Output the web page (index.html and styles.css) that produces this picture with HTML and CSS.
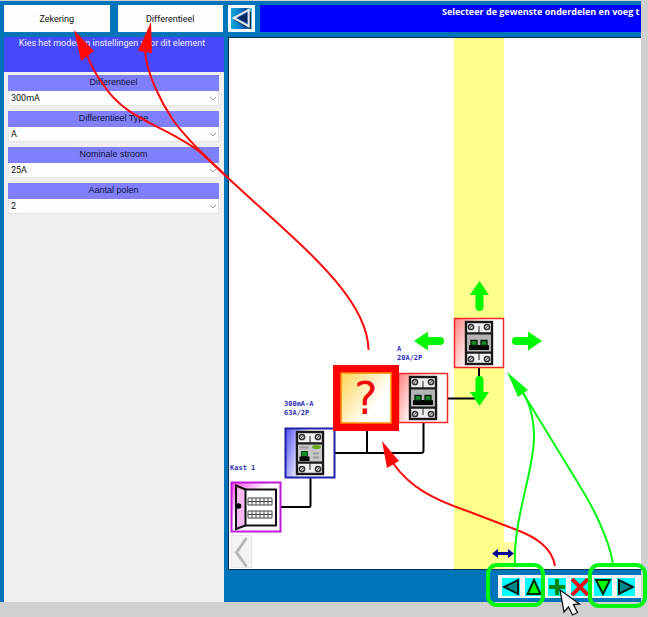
FILE: index.html
```html
<!DOCTYPE html>
<html lang="nl">
<head>
<meta charset="utf-8">
<title>Differentieel</title>
<link rel="stylesheet" href="styles.css">
</head>
<body>
<div class="app">
  <aside class="side">
    <div class="tabs">
      <button class="tab" type="button">Zekering</button>
      <button class="tab" type="button">Differentieel</button>
    </div>
    <p class="hint">Kies het model en instellingen voor dit element</p>
    <form class="settings">
      <div class="field">
        <label for="sens">Differentieel</label>
        <div class="pick"><select id="sens"><option>300mA</option></select><svg class="chev" viewBox="0 0 8 5"><path d="M1 1l3 3 3-3"/></svg></div>
      </div>
      <div class="field">
        <label for="type">Differentieel Type</label>
        <div class="pick"><select id="type"><option>A</option></select><svg class="chev" viewBox="0 0 8 5"><path d="M1 1l3 3 3-3"/></svg></div>
      </div>
      <div class="field">
        <label for="amp">Nominale stroom</label>
        <div class="pick"><select id="amp"><option>25A</option></select><svg class="chev" viewBox="0 0 8 5"><path d="M1 1l3 3 3-3"/></svg></div>
      </div>
      <div class="field">
        <label for="poles">Aantal polen</label>
        <div class="pick"><select id="poles"><option>2</option></select><svg class="chev" viewBox="0 0 8 5"><path d="M1 1l3 3 3-3"/></svg></div>
      </div>
    </form>
  </aside>
  <main class="work">
    <header class="top">
      <button class="back" type="button" aria-label="Terug">
        <svg viewBox="0 0 22 22"><defs><linearGradient id="bk"><stop offset="0" stop-color="#18a8d8"/><stop offset=".45" stop-color="#0878c8"/><stop offset=".7" stop-color="#084ca0"/><stop offset="1" stop-color="#58c8e8"/></linearGradient></defs><path fill="url(#bk)" d="M0 0h22v22H0z"/><path d="M4 12L20 21V4" fill="none" stroke="#102848" stroke-width="2"/><path d="M3 10.500L18.500 2v17z" fill="#0a58b0" stroke="#e4e4e4" stroke-width="2.200"/><path d="M7 10.500L17 5v11z" fill="#082860"/></svg>
      </button>
      <h1 class="title">Selecteer de gewenste onderdelen en voeg t</h1>
    </header>
    <div class="canvas">
      <svg class="scheme" width="413" height="531" viewBox="229 38 413 531">
        <defs>
          <linearGradient id="gr" x2="1" y2=".4"><stop offset="0" stop-color="#ff8080"/><stop offset=".55" stop-color="#fff"/></linearGradient>
          <linearGradient id="gb" x2="1" y2=".25"><stop offset="0" stop-color="#5050f0"/><stop offset=".5" stop-color="#fff"/></linearGradient>
          <linearGradient id="gm" x2=".8" y2=".8"><stop offset="0" stop-color="#ff40e8"/><stop offset=".5" stop-color="#fff"/></linearGradient>
          <linearGradient id="gy" x2="1" y2=".7"><stop offset="0" stop-color="#ffd040"/><stop offset=".75" stop-color="#fff"/></linearGradient>
          <g id="shell">
            <rect x="12" y="4" width="26" height="42" fill="#f0f0f4" stroke="#181818" stroke-width="2.400"/>
            <path d="M12 15.500h26M12 34.500h26" stroke="#181818" stroke-width="2.400"/>
            <path d="M25 8v7M25 35v7" stroke="#222"/>
            <g fill="#ccc" stroke="#333" stroke-width="1.500"><circle cx="17" cy="9" r="2.600"/><circle cx="33" cy="9" r="2.600"/><circle cx="17" cy="41" r="2.600"/><circle cx="33" cy="41" r="2.600"/></g>
            <path d="M15.500 10.500l3-3M31.500 10.500l3-3M15.500 42.500l3-3M31.500 42.500l3-3" stroke="#555" stroke-width=".8"/>
          </g>
          <g id="breaker">
            <use href="#shell"/>
            <path fill="#b4b4b4" d="M13 16.700h24v16.600H13z"/>
            <rect x="15" y="27" width="20" height="5" rx="1" fill="#050505"/>
            <g fill="#178a2c" stroke="#052008" stroke-width="1.300"><path d="M17 22.500h6v5h-6zM27 22.500h6v5h-6z"/></g>
          </g>
        </defs>
        <path fill="#ffff8c" d="M454 38h50v531h-50z"/>
        <path fill="#ffffa8" d="M504 542h11v27h-11z"/>
        <path d="M281 507h28q1.500 0 1.500-1.500V478M335 453h86q2.500 0 2.500-2.500V423M367 430v23M448 398.500h31V368" fill="none" stroke="#000" stroke-width="2"/>

        <g transform="translate(231 482)">
          <rect x=".5" y=".5" width="49" height="49" fill="url(#gm)" stroke="#c018d8" stroke-width="2"/>
          <path d="M14 7.500h31v36H14z" fill="#fff" stroke="#111" stroke-width="2"/>
          <path d="M5 3.500l9.500 4v36L5 47z" fill="#f6b8ee" stroke="#111" stroke-width="2"/>
          <circle cx="7.500" cy="24" r="2.800" fill="#000"/>
          <path d="M17 16h24v7H17zM17 19.500h24M17 29h24v7H17zM17 32.500h24M21 16v7M25 16v7M29 16v7M33 16v7M37 16v7M21 29v7M25 29v7M29 29v7M33 29v7M37 29v7" fill="none" stroke="#444"/>
        </g>
        <g transform="translate(285 428)">
          <rect x=".5" y=".5" width="49" height="49" fill="url(#gb)" stroke="#2020a8" stroke-width="2"/>
          <use href="#shell"/>
          <path fill="#c8c8c8" d="M13 16.700h24v16.600H13z"/>
          <path d="M14.500 19.500h9M28 25.500h6M28 29.500h6" stroke="#999" stroke-width="2"/>
          <ellipse cx="31.500" cy="19" rx="4.500" ry="2" fill="#65a818"/>
          <path fill="#178a2c" stroke="#041" d="M16.500 23.500h6v5h-6z"/>
          <path fill="#050505" d="M14.500 28.500h10v4.500h-10z"/>
        </g>
        <g transform="translate(398 373)"><rect x=".5" y=".5" width="49" height="49" fill="url(#gr)" stroke="#f02828" stroke-width="1.500"/><use href="#breaker"/></g>
        <g transform="translate(454 318)"><rect x=".5" y=".5" width="49" height="49" fill="url(#gr)" stroke="#f02828" stroke-width="1.500"/><use href="#breaker"/></g>
        <rect x="337" y="369" width="58" height="58" fill="url(#gy)" stroke="#f00" stroke-width="8"/>
        <rect x="341" y="373" width="50" height="50" fill="none" stroke="#ff8c00" stroke-width="1.500"/>
        <text class="query" x="366" y="414">?</text>

        <g class="tag">
          <text x="230" y="470">Kast 1</text>
          <text x="284" y="406">300mA-A</text><text x="284" y="415">63A/2P</text>
          <text x="397" y="351">A</text><text x="397" y="360">20A/2P</text>
        </g>
        <g fill="#00f800">
          <path id="up" d="M479.500 281l9.500 14h-5.500v12a4 4 0 0 1-8 0V295H470z"/>
          <use href="#up" transform="rotate(180 479.500 343.500)"/>
          <use href="#up" transform="rotate(90 479.500 343.500) translate(-2.500 0)"/>
          <use href="#up" transform="rotate(-90 479.500 343.500) translate(2.500 -3)"/>
        </g>
        <path fill="#000090" d="M492 553.500l6-4.500v3h10v-3l6 4.500-6 4.500v-3h-10v3z"/>
        <path fill="#f4f4f4" stroke="#ddd" stroke-width=".7" d="M231.500 535.500h20v32h-20z"/>
        <path d="M246.500 538l-10 14.500 10 14" fill="none" stroke="#b8b8b8" stroke-width="3"/>
      </svg>
    </div>
    <footer class="bottom">
      <div class="tools">
        <button type="button" aria-label="Links"><svg viewBox="0 0 18 18"><path d="M2 9L16 2v14z" fill="#088" stroke="#001818" stroke-width="2"/></svg></button>
        <button type="button" aria-label="Omhoog"><svg viewBox="0 0 18 18"><path d="M9 2l6.500 14h-13z" fill="#0f0" stroke="#002800" stroke-width="2"/></svg></button>
        <button type="button" aria-label="Toevoegen"><svg viewBox="0 0 18 18"><path d="M9 1v16M1 9h16" stroke="#080" stroke-width="4"/></svg></button>
        <button type="button" aria-label="Verwijderen"><svg viewBox="0 0 18 18"><path d="M1 1l16 16M17 1L1 17" stroke="#e81010" stroke-width="4"/></svg></button>
        <button type="button" aria-label="Omlaag"><svg viewBox="0 0 18 18"><path d="M9 16L2 2h14z" fill="#0f0" stroke="#002800" stroke-width="2"/></svg></button>
        <button type="button" aria-label="Rechts"><svg viewBox="0 0 18 18"><path d="M16 9L2 2v14z" fill="#088" stroke="#001818" stroke-width="2"/></svg></button>
      </div>
    </footer>
  </main>
</div>
<svg class="notes" width="648" height="617" viewBox="0 0 648 617" aria-hidden="true">
  <g fill="none" stroke="#ff0808" stroke-width="2">
    <path d="M368.500 350C368 295 292 238 227 177L200 152C165 125 125 120 103 84Q93 71 87 55"/>
    <path d="M227 177L197 148C187 137 180 130 173 120C161 102 147 75 145 51"/>
    <path d="M555 566C552 547 535 537 517 530L470 512C435 500 410 488 393 463"/>
  </g>
  <path fill="#ff0808" d="M74 30l7 31 13-10zM151 22l-13 29 14 2zM382 441l5 27 12-7z"/>
  <g fill="none" stroke="#00f810" stroke-width="2">
    <path d="M515 564C513 520 534 470 534 438Q534 410 523 393"/>
    <path d="M613 564C609 538 592 505 578 483L523 393"/>
  </g>
  <path fill="#00f810" d="M507 372l11 25 10-7z"/>
  <g fill="none" stroke="#00f810" stroke-width="4"><rect x="488" y="565" width="55" height="40" rx="9"/><rect x="590" y="565" width="55" height="41" rx="9"/></g>
  <path d="M560 590l4 22 4.500-5 4 8 5-2.500-4-8 6-.5z" fill="#fff" stroke="#111" stroke-width="1.300"/>
</svg>
</body>
</html>
```
FILE: styles.css
```css
* { box-sizing: border-box; }

body {
  margin: 0;
  min-height: 100vh;
  display: flex;
  padding: 1px 7px 15px 0;
  background: #d0d0d0;
  font-family: Roboto, "Noto Sans", sans-serif;
  font-size: 9px;
}

button { margin: 0; padding: 0; border: 0; font: inherit; }

.app {
  flex: 1;
  display: grid;
  grid-template-columns: 228px 1fr;
  background: #0074b8;
}

.side {
  display: flex;
  flex-direction: column;
  padding: 4px 4px 0;
}

.tabs { display: flex; gap: 8px; margin: 0 1px 5px 0; }
.tab {
  flex: 1;
  height: 27px;
  background: #fdfdfd;
  color: #111;
}

.hint {
  margin: 0;
  height: 35px;
  padding-right: 4px;
  background: #4848ff;
  color: #f0f0ff;
  line-height: 12px;
  text-align: center;
}

.settings {
  flex: 1;
  display: flex;
  flex-direction: column;
  gap: 5px;
  padding: 3px 5px 0 4px;
  background: #efefef;
}

.field label {
  display: block;
  height: 16px;
  background: #8080ff;
  color: #111130;
  font-family: "Liberation Sans", Arial, sans-serif;
  line-height: 14px;
  text-align: center;
}

.pick { display: flex; align-items: center; position: relative; }
.pick select {
  appearance: none;
  width: 100%;
  height: 15px;
  padding: 0 16px 0 2px;
  border: 1px solid #e4e4e4;
  border-top: 0;
  border-radius: 0;
  background: #fdfdfd;
  color: #111;
  font: inherit;
}
.chev { position: absolute; right: 2px; width: 8px; height: 5px; pointer-events: none; }
.chev path { fill: none; stroke: #999; }

.work { display: flex; flex-direction: column; min-width: 0; }

.top { display: flex; gap: 5px; height: 36px; padding: 4px 0 5px; }
.back { width: 27px; height: 27px; padding: 3px; background: #f4f8fa; }
.back svg { display: block; width: 100%; height: 100%; }
.title {
  flex: 1;
  margin: 0;
  padding-left: 182px;
  background: #00f;
  color: #fff;
  font-family: "Open Sans", "Noto Sans", sans-serif;
  font-size: 9px;
  font-weight: 700;
  line-height: 14px;
  white-space: nowrap;
}

.canvas {
  flex: 1;
  min-height: 533px;
  overflow: hidden;
  border: solid #083050;
  border-width: 1px 0 1px 1px;
  background: #fff;
}
.scheme { display: block; }
.tag {
  fill: #3030b8;
  font: 700 7px "DejaVu Sans Mono", monospace;
}
.query {
  fill: #f00808;
  font: 44px "DejaVu Sans", sans-serif;
  text-anchor: middle;
}

.bottom { display: flex; justify-content: flex-end; height: 32px; padding: 5px 0; }
.tools { display: flex; align-items: center; gap: 5px; height: 23px; padding: 0 6px 0 4px; background: #f4f4f4; }
.tools button { width: 18px; height: 18px; background: #0ff; }
.tools svg { display: block; }

.notes { position: absolute; top: 0; left: 0; pointer-events: none; }
```
